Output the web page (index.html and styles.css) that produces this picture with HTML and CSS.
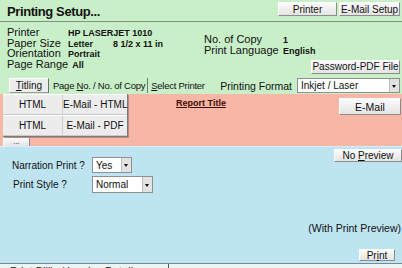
FILE: index.html
```html
<html>

<head>
    <link rel="stylesheet" href="styles.css">
</head>

<body>
    <div id="setup">
        <div id="head">
            <h1>Printing Setup...</h1>
            <div class="toolbar">
                <a class="btn btnPrinter">Printer</a>
                <a class="btn btnMail">E-Mail Setup</a>
            </div>
        </div>

        <div id="info">
            <div class="infoLeft">
                <span class="lbl">Printer</span><b>HP LASERJET 1010</b>
                <span class="lbl">Paper Size</span><span><b>Letter</b><b class="size">8 1/2 x 11 in</b></span>
                <span class="lbl">Orientation</span><b>Portrait</b>
                <span class="lbl wide">Page Range <b>All</b></span>
            </div>
            <div class="infoRight">
                <span class="lbl">No. of Copy</span><b>1</b>
                <span class="lbl">Print Language</span><b>English</b>
                <a class="btn pdfBtn">Password-PDF File</a>
            </div>
        </div>

        <div id="tabs">
            <a class="tab active"><span><u>T</u>itling</span></a>
            <a class="tab"><span>Page <u>N</u>o. / No. of Copy</span></a>
            <a class="tab"><span><u>S</u>elect Printer</span></a>
            <div class="format">
                <span class="lbl">Printing Format</span>
                <div class="combo comboFormat"><span>Inkjet / Laser</span><i class="arrow"></i></div>
            </div>
        </div>

        <div id="report">
            <div class="reportTop">
                <span class="title">Report Title</span>
                <a class="btn mailBtn">E-Mail</a>
            </div>
            <a class="btn dotsBtn">...</a>

            <!-- menu opened from Titling -->
            <div id="menu">
                <div class="row"><span>HTML</span><span>E-Mail - HTML</span></div>
                <div class="row"><span>HTML</span><span>E-Mail - PDF</span></div>
            </div>
        </div>

        <div id="options">
            <div class="optTop">
                <div class="form">
                    <div class="field">
                        <span class="lbl">Narration Print ?</span>
                        <div class="combo comboYes"><span>Yes</span><i class="arrow"></i></div>
                    </div>
                    <div class="field">
                        <span class="lbl">Print Style ?</span>
                        <div class="combo comboStyle"><span>Normal</span><i class="arrow"></i></div>
                    </div>
                </div>
                <a class="btn previewBtn"><span>No <u>P</u>review</span></a>
            </div>
            <div class="printArea">
                <div class="note">(With Print Preview)</div>
                <a class="btn printBtn"><span>Pr<u>i</u>nt</span></a>
            </div>
        </div>

        <div id="foot">
            <span class="footTab">Print Bill's / Invoice Details</span>
        </div>
    </div>
</body>

</html>
```

FILE: styles.css
```css
body {
    margin: 0;
    font-family: 'Liberation Sans', Arial, sans-serif;
    font-size: 11px;
    color: #111;
}

#setup {
    width: 402px;
    height: 268px;
    overflow: hidden;
}

a {
    text-decoration: none;
    color: #111;
}

b {
    font-size: 9px;
}

.lbl {
    white-space: nowrap;
}

/* 3d button */
.btn {
    display: flex;
    align-items: center;
    justify-content: center;
    box-sizing: border-box;
    font-size: 10px;
    background: linear-gradient(#fbfbfb, #e4e4e4);
    border: 1px solid;
    border-color: #fff #8c8c8c #8c8c8c #fff;
    white-space: nowrap;
}

/* header */
#head {
    height: 21px;
    display: flex;
    justify-content: space-between;
    align-items: flex-start;
    background: #c8efc8;
    border-bottom: 1px solid #7f937f;
    padding: 0 2px 0 7px;
}

#head h1 {
    margin: 4px 0 0;
    font-size: 13px;
    letter-spacing: -0.4px;
    font-weight: bold;
}

.toolbar {
    display: flex;
    gap: 2px;
    padding-top: 2px;
}

.btnPrinter {
    width: 59px;
    height: 14px;
}

.btnMail {
    width: 61px;
    height: 14px;
}

/* info block */
#info {
    height: 55px;
    box-sizing: border-box;
    display: grid;
    grid-template-columns: 197px 1fr;
    padding: 5px 2px 0 7px;
    background: #c8efc8;
}

.infoLeft {
    display: grid;
    grid-template-columns: 61px auto;
    grid-auto-rows: 10.7px;
    line-height: 10.7px;
    align-items: baseline;
}

.infoLeft .wide {
    grid-column: 1 / 3;
}

.infoLeft .wide b {
    margin-left: 1px;
}

.infoLeft .size {
    margin-left: 20px;
}

.infoRight {
    display: grid;
    grid-template-columns: 79px auto;
    grid-auto-rows: 10.7px;
    line-height: 10.7px;
    align-items: baseline;
    padding-top: 7px;
}

.pdfBtn {
    grid-column: 1 / 3;
    justify-self: end;
    width: 89px;
    height: 14px;
    margin-top: 5px;
}

/* tab row */
#tabs {
    height: 17px;
    display: flex;
    align-items: center;
    padding: 0 2px 0 9px;
    background: #c8efc8;
    white-space: nowrap;
}

.tab {
    height: 15px;
    display: flex;
    align-items: center;
    box-sizing: border-box;
    padding: 0 2px;
    font-size: 9.5px;
    letter-spacing: -0.25px;
    border-right: 1px solid #6d7d6d;
    margin-right: 1px;
}

.tab.active {
    width: 40px;
    justify-content: center;
    font-size: 10px;
    letter-spacing: 0;
    background: #ededed;
    border: 1px solid;
    border-color: #fff #6d6d6d #9a9a9a #fff;
    margin-right: 2px;
}

.tab:nth-child(3) {
    border-right: none;
}

.format {
    margin-left: auto;
    display: flex;
    align-items: center;
    gap: 5px;
}

.format .lbl {
    font-size: 10.5px;
}

/* combo boxes */
.combo {
    display: flex;
    box-sizing: border-box;
    background: #fff;
    border: 1px solid #8f8f8f;
    font-size: 10px;
    align-items: stretch;
    white-space: nowrap;
}

.combo span {
    flex: 1;
    display: flex;
    align-items: center;
    padding-left: 3px;
}

.combo .arrow {
    width: 9px;
    background: #e2e2e2;
    border-left: 1px solid #bdbdbd;
    position: relative;
}

.combo .arrow:after {
    content: "";
    position: absolute;
    left: 2px;
    top: 50%;
    margin-top: -1px;
    border-left: 2.5px solid transparent;
    border-right: 2.5px solid transparent;
    border-top: 3px solid #111;
}

.comboFormat {
    width: 103px;
    height: 15px;
}

.comboYes {
    width: 40px;
    height: 16px;
}

.comboStyle {
    width: 61px;
    height: 17px;
}

/* pink report area */
#report {
    height: 52px;
    position: relative;
    display: flex;
    flex-direction: column;
    justify-content: space-between;
    background: #f7b6a6;
    overflow: hidden;
}

.reportTop {
    display: grid;
    grid-template-columns: 1fr auto 1fr;
    align-items: start;
}

.reportTop .title {
    grid-column: 2;
    margin-top: 4px;
    font-size: 9px;
    font-weight: bold;
    text-decoration: underline;
    color: #3c0c00;
}

.mailBtn {
    grid-column: 3;
    justify-self: end;
    width: 62px;
    height: 17px;
    margin: 4px 1px 0 0;
    font-size: 10.5px;
}

.dotsBtn {
    width: 27px;
    height: 10px;
    margin: 0 0 -1px 3px;
    align-items: flex-end;
    font-size: 8px;
    line-height: 8px;
}

#menu {
    position: absolute;
    left: 3px;
    top: 0;
    width: 124px;
    background: #ececec;
    border-right: 1px solid #7a7a7a;
    border-bottom: 1px solid #7a7a7a;
    box-shadow: 1px 1px 0 #b88a80;
}

#menu .row {
    display: grid;
    grid-template-columns: 60px 1fr;
    height: 19px;
    border-top: 1px solid #fff;
    border-bottom: 1px solid #c9c9c9;
}

#menu .row span {
    display: flex;
    align-items: center;
    justify-content: center;
    font-size: 10px;
    white-space: nowrap;
}

#menu .row span:first-child {
    border-right: 1px solid #cfcfcf;
}

/* blue options area */
#options {
    height: 117px;
    box-sizing: border-box;
    display: flex;
    flex-direction: column;
    background: #bee4f2;
    border-top: 1px solid #d8eff7;
}

.optTop {
    display: flex;
    justify-content: space-between;
    align-items: flex-start;
}

.form {
    padding: 10px 0 0 12px;
}

.field {
    display: flex;
    align-items: center;
    margin-bottom: 3px;
}

.field .lbl {
    width: 80px;
    font-size: 10px;
}

.field:nth-child(2) .lbl {
    padding-left: 1px;
    width: 79px;
}

.previewBtn {
    width: 68px;
    height: 13px;
    margin-top: 2px;
}

.printArea {
    margin-top: auto;
    display: flex;
    flex-direction: column;
    align-items: flex-end;
    padding-bottom: 2px;
}

.note {
    font-size: 10.5px;
    line-height: 13px;
    padding-right: 1px;
}

.printBtn {
    width: 36px;
    height: 12px;
    margin: 14px 7px 0 0;
}

/* partly hidden bottom strip */
#foot {
    height: 5px;
    box-sizing: border-box;
    overflow: hidden;
    background: #eef3f4;
    border-top: 1px solid #6e8c9a;
    padding-left: 10px;
}

.footTab {
    display: inline-block;
    width: 158px;
    font-size: 11px;
    line-height: 10px;
    padding-top: 2px;
    border-right: 1px solid #555;
    color: #222;
}
```
